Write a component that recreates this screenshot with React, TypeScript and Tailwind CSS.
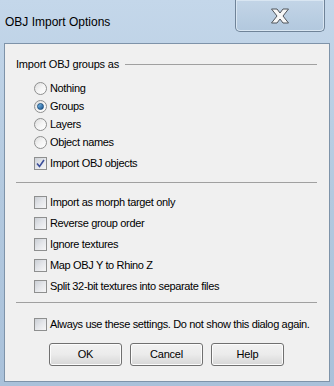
import React from 'react';

function Radio({ checked }: { checked?: boolean }) {
  return (
    <span className="relative flex h-[13px] w-[13px] shrink-0 items-center justify-center rounded-full border border-[#8e8f8f] bg-gradient-to-br from-[#dcdcdc] via-[#f4f4f4] to-white">
      {checked && (
        <span className="h-[7px] w-[7px] rounded-full border border-[#1c4f7f] bg-gradient-to-br from-[#7ec0ee] to-[#17538c]" />
      )}
    </span>
  );
}

function Check({ checked }: { checked?: boolean }) {
  return (
    <span className="relative flex h-[13px] w-[13px] shrink-0 items-center justify-center border border-[#8e8f8f] bg-white">
      <span className="flex h-[11px] w-[11px] items-center justify-center bg-gradient-to-br from-[#cbcfd5] via-[#e4e6ea] to-[#f6f6f6]">
        {checked && (
          <svg width="9" height="9" viewBox="0 0 9 9">
            <path d="M1 4.5 L3.5 7.5 L8 1" fill="none" stroke="#3b4e9b" strokeWidth="1.6" />
          </svg>
        )}
      </span>
    </span>
  );
}

function Row({ label, children, h }: { label: string; children: React.ReactNode; h: string }) {
  return (
    <div className={`flex items-center gap-[3px] pl-[18px] ${h}`}>
      {children}
      <span className="whitespace-nowrap text-[11px] leading-none tracking-[-0.35px] text-black">{label}</span>
    </div>
  );
}

function Btn({ label }: { label: string }) {
  return (
    <button className="h-[23px] w-[73px] rounded-[3px] border border-[#707070] bg-gradient-to-b from-[#f2f2f2] via-[#ebebeb] to-[#d6d6d6] text-[11px] tracking-[-0.2px] text-black shadow-[inset_0_0_0_1px_#fcfcfc]">
      {label}
    </button>
  );
}

export default function App() {
  return (
    <div
      className="flex h-[386px] w-[334px] flex-col bg-gradient-to-b from-[#c4d7ea] via-[#b3c9df] to-[#a9c1da]"
      style={{ fontFamily: '"Liberation Sans", Arial, sans-serif' }}
    >
      {/* Title bar */}
      <div className="flex h-[43px] shrink-0 items-start">
        <div className="pl-[5px] pt-[13px] text-[12px] text-black">OBJ Import Options</div>
        <div className="ml-auto mr-[9px] flex h-[32px] w-[90px] items-center justify-center rounded-b-[5px] border border-t-0 border-[#6f8398] bg-gradient-to-b from-[#c3d5e7] to-[#b2c8de] shadow-[inset_0_0_0_1px_#d9e6f2]">
          <svg width="22" height="16" viewBox="0 0 22 16">
            <path
              d="M2.5 1 H8 L11 5 L14 1 H19.5 L14 8 L19.5 15 H14 L11 11 L8 15 H2.5 L8 8 Z"
              fill="#f7f7f7"
              stroke="#4f545b"
              strokeWidth="1"
              strokeLinejoin="round"
            />
          </svg>
        </div>
      </div>

      {/* Client area */}
      <div className="mx-[4px] flex h-[339px] flex-col border border-[#7e93a9] bg-[#f0f0f0] pl-[11px] pr-[12px]">
        <div className="mt-[12px] flex h-[16px] items-center gap-[6px]">
          <span className="whitespace-nowrap text-[11px] leading-none tracking-[-0.2px] text-black">Import OBJ groups as</span>
          <span className="h-px flex-1 bg-[#a0a0a0]" />
        </div>

        <div className="mt-[7px] flex flex-col">
          <Row label="Nothing" h="h-[18px]"><Radio /></Row>
          <Row label="Groups" h="h-[18px]"><Radio checked /></Row>
          <Row label="Layers" h="h-[18px]"><Radio /></Row>
          <Row label="Object names" h="h-[19px]"><Radio /></Row>
        </div>
        <div className="mt-[2px]">
          <Row label="Import OBJ objects" h="h-[18px]"><Check checked /></Row>
        </div>

        <div className="mt-[10px] h-px bg-[#a0a0a0]" />

        <div className="mt-[9px] flex flex-col">
          <Row label="Import as morph target only" h="h-[21px]"><Check /></Row>
          <Row label="Reverse group order" h="h-[21px]"><Check /></Row>
          <Row label="Ignore textures" h="h-[21px]"><Check /></Row>
          <Row label="Map OBJ Y to Rhino Z" h="h-[21px]"><Check /></Row>
          <Row label="Split 32-bit textures into separate files" h="h-[21px]"><Check /></Row>
        </div>

        <div className="mt-[5px] h-px bg-[#a0a0a0]" />

        <div className="mt-[11px]">
          <Row label="Always use these settings. Do not show this dialog again." h="h-[21px]"><Check /></Row>
        </div>

        <div className="mt-[8px] flex justify-center gap-[8px]">
          <Btn label="OK" />
          <Btn label="Cancel" />
          <Btn label="Help" />
        </div>
      </div>
    </div>
  );
}
